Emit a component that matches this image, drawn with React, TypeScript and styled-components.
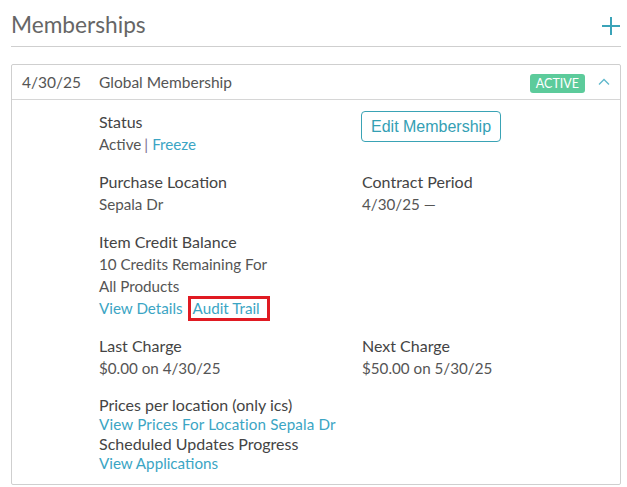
import React from 'react';
import styled, { createGlobalStyle } from 'styled-components';

const GlobalStyle = createGlobalStyle`
  body {
    margin: 0;
    background: #fff;
    font-family: Lato, 'Open Sans', sans-serif;
    color: #4f4f4f;
  }
`;

const Page = styled.div`
  padding: 0 6px 0 11px;
`;

const TitleBar = styled.div`
  display: flex;
  align-items: center;
  justify-content: space-between;
  height: 47px;
  padding-top: 2px;
  border-bottom: 1px solid #cfcfcf;
  box-sizing: border-box;
`;

const Title = styled.h2`
  margin: 0;
  font-size: 22.7px;
  font-weight: 400;
  color: #666;
`;

const AddButton = styled.button`
  border: 0;
  background: none;
  padding: 0;
  width: 20px;
  height: 20px;
  margin: 4px 0 0 0;
  cursor: pointer;
  display: flex;
`;

const Card = styled.div`
  margin-top: 17px;
  border: 1px solid #cfcfcf;
  border-radius: 2px;
`;

const CardHeader = styled.div`
  display: flex;
  align-items: center;
  height: 34px;
  padding: 0 10px;
  border-bottom: 1px solid #d6d6d6;
  font-size: 15.5px;
  color: #555;
`;

const HeaderDate = styled.span`
  width: 77px;
`;

const HeaderName = styled.span`
  flex: 1;
`;

const Badge = styled.span`
  background: #5ccb9b;
  color: #fff;
  font-size: 12.5px;
  padding: 3px 6px 3px 6px;
  border-radius: 3px;
  line-height: 13px;
  margin: 2px 13px 0 0;
`;

const Chevron = styled.span`
  display: flex;
  width: 12px;
`;

const CardBody = styled.div`
  display: grid;
  grid-template-columns: 263px 1fr;
  row-gap: 16px;
  padding: 11px 0 11px 87px;
  font-size: 15.2px;
  line-height: 22px;
`;

const Field = styled.div<{ $tight?: boolean; $span?: boolean }>`
  display: flex;
  flex-direction: column;
  align-items: flex-start;
  line-height: ${(p) => (p.$tight ? '19.5px' : '22px')};
  grid-column: ${(p) => (p.$span ? '1 / -1' : 'auto')};
`;

const Label = styled.div`
  color: #444;
  font-size: 16px;
`;

const Value = styled.div`
  color: #555;
`;

const Link = styled.a<{ $wide?: boolean }>`
  color: #3ba5c4;
  text-decoration: none;
  cursor: pointer;
  letter-spacing: ${(p) => (p.$wide ? '0.15px' : '0')};
`;

const Sep = styled.span`
  color: #7a6e8e;
  margin: 0 4px 0 3px;
`;

const LinkRow = styled.div`
  display: flex;
  align-items: center;
  gap: 5px;
  height: 22px;
`;

const Highlight = styled.span`
  border: 3px solid #e01a22;
  padding: 0 7px 0 2px;
  line-height: 19px;
`;

const EditButton = styled.button`
  font-family: 'Liberation Sans', Arial, sans-serif;
  font-size: 16px;
  color: #34a0b4;
  background: #fff;
  border: 1px solid #3aa3b5;
  border-radius: 4px;
  height: 31px;
  padding: 0 9px;
  margin-left: -1px;
  cursor: pointer;
`;

export default function App() {
  return (
    <Page>
      <GlobalStyle />
      <TitleBar>
        <Title>Memberships</Title>
        <AddButton aria-label="Add membership">
          <svg width="20" height="20" viewBox="0 0 20 20">
            <path d="M10 1v18M1 10h18" stroke="#3aa3b8" strokeWidth="2" fill="none" />
          </svg>
        </AddButton>
      </TitleBar>
      <Card>
        <CardHeader>
          <HeaderDate>4/30/25</HeaderDate>
          <HeaderName>Global Membership</HeaderName>
          <Badge>ACTIVE</Badge>
          <Chevron>
            <svg width="12" height="8" viewBox="0 0 12 8">
              <path d="M1 6.5L6 1.5l5 5" stroke="#5fb8cc" strokeWidth="1.3" fill="none" />
            </svg>
          </Chevron>
        </CardHeader>
        <CardBody>
          <Field>
            <Label>Status</Label>
            <Value>
              Active<Sep>|</Sep>
              <Link>Freeze</Link>
            </Value>
          </Field>
          <Field>
            <EditButton>Edit Membership</EditButton>
          </Field>
          <Field>
            <Label>Purchase Location</Label>
            <Value>Sepala Dr</Value>
          </Field>
          <Field>
            <Label>Contract Period</Label>
            <Value>4/30/25 —</Value>
          </Field>
          <Field $span>
            <Label>Item Credit Balance</Label>
            <Value>10 Credits Remaining For</Value>
            <Value>All Products</Value>
            <LinkRow>
              <Link>View Details</Link>
              <Highlight>
                <Link>Audit Trail</Link>
              </Highlight>
            </LinkRow>
          </Field>
          <Field>
            <Label>Last Charge</Label>
            <Value>$0.00 on 4/30/25</Value>
          </Field>
          <Field>
            <Label>Next Charge</Label>
            <Value>$50.00 on 5/30/25</Value>
          </Field>
          <Field $tight $span>
            <Label>Prices per location (only ics)</Label>
            <Link $wide>View Prices For Location Sepala Dr</Link>
            <Label>Scheduled Updates Progress</Label>
            <Link>View Applications</Link>
          </Field>
        </CardBody>
      </Card>
    </Page>
  );
}
